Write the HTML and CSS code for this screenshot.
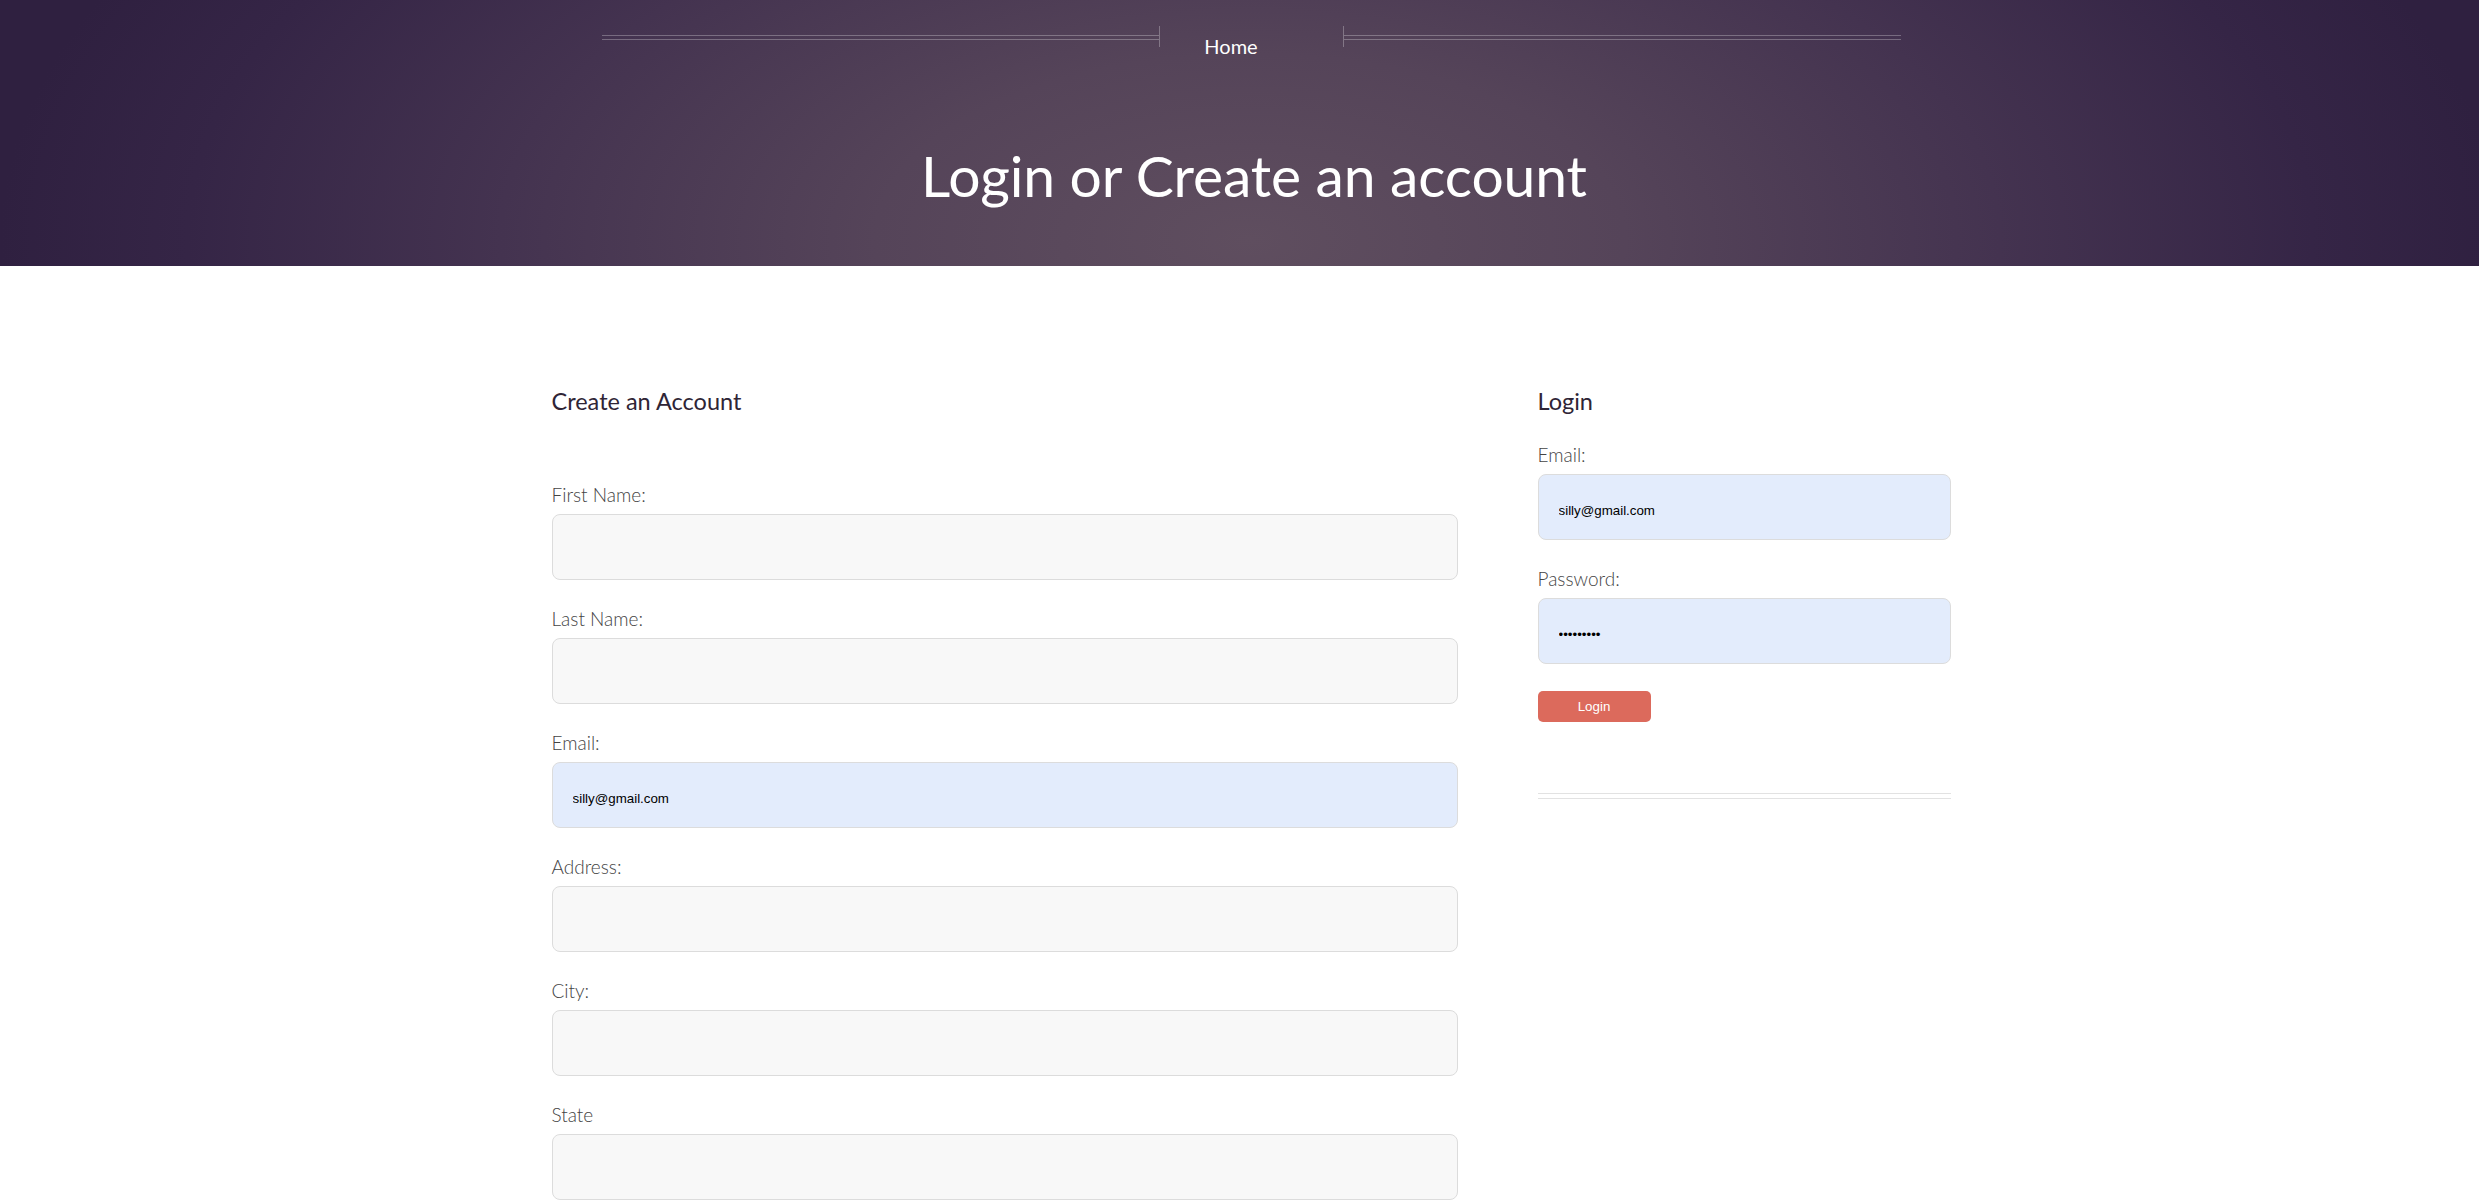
FILE: index.html
```html
<!DOCTYPE html>
<html lang="en">
<head>
<meta charset="utf-8">
<title>Login or Create an account</title>
<link rel="stylesheet" href="styles.css">
</head>
<body>
<header class="hero">
  <nav class="nav">
    <span class="nav-line"></span>
    <a class="nav-link" href="#">Home</a>
    <span class="nav-line"></span>
  </nav>
  <h1 class="hero-title">Login or Create an account</h1>
</header>
<main class="main">
  <div class="columns">
    <section class="col">
      <h2 class="col-title col-title-wide">Create an Account</h2>
      <div class="field">
        <label class="label">First Name:</label>
        <input class="input" type="text">
      </div>
      <div class="field">
        <label class="label">Last Name:</label>
        <input class="input" type="text">
      </div>
      <div class="field">
        <label class="label">Email:</label>
        <input class="input input-filled" type="text" value="silly@gmail.com">
      </div>
      <div class="field">
        <label class="label">Address:</label>
        <input class="input" type="text">
      </div>
      <div class="field">
        <label class="label">City:</label>
        <input class="input" type="text">
      </div>
      <div class="field">
        <label class="label">State</label>
        <input class="input" type="text">
      </div>
    </section>
    <section class="col">
      <h2 class="col-title">Login</h2>
      <div class="field">
        <label class="label">Email:</label>
        <input class="input input-filled" type="text" value="silly@gmail.com">
      </div>
      <div class="field">
        <label class="label">Password:</label>
        <input class="input input-filled" type="password" value="123456789">
      </div>
      <button class="btn" type="button">Login</button>
      <div class="divider"></div>
    </section>
  </div>
</main>
</body>
</html>
```
FILE: styles.css
```css
* { box-sizing: border-box; }
html, body { margin: 0; padding: 0; }
body {
  font-family: Lato, "Liberation Sans", sans-serif;
  background: #fff;
  color: #333;
}
.hero {
  height: 266px;
  padding: 26px 0 0 23px;
  background: radial-gradient(ellipse 1250px 620px at 1250px 240px, #5f4e5f 0%, #554459 30%, #443350 60%, #352546 85%, #2f2040 100%);
  color: #fff;
}
.nav {
  width: 1299px;
  margin: 0 auto;
  display: flex;
  align-items: flex-start;
}
.nav-line {
  flex: 1;
  height: 5px;
  margin-top: 9px;
  border-top: 1px solid rgba(255,255,255,0.28);
  border-bottom: 1px solid rgba(255,255,255,0.28);
}
.nav-link {
  width: 185px;
  height: 21px;
  padding-top: 9px;
  padding-right: 40px;
  line-height: 22px;
  text-align: center;
  font-size: 20px;
  font-weight: 400;
  color: #fff;
  text-decoration: none;
  border-left: 1px solid rgba(255,255,255,0.28);
  border-right: 1px solid rgba(255,255,255,0.28);
}
.hero-title {
  margin: 94px 0 0;
  padding-left: 6px;
  text-align: center;
  font-size: 57px;
  font-weight: 400;
  line-height: 68px;
  color: #fff;
  letter-spacing: -0.1px;
}
.main {
  padding: 121px 0 0 23px;
}
.columns {
  width: 1399px;
  margin: 0 auto;
  display: grid;
  grid-template-columns: 906px 413px;
  column-gap: 80px;
}
.col-title {
  margin: 0 0 27px;
  font-size: 23.5px;
  font-weight: 400;
  line-height: 29px;
  color: #2f2536;
}
.col-title-wide { margin-bottom: 67px; }
.field {
  display: flex;
  flex-direction: column;
  margin-bottom: 27px;
}
.label {
  font-size: 19px;
  font-weight: 300;
  line-height: 24px;
  color: #444;
  margin-bottom: 7px;
}
.input {
  height: 66px;
  width: 100%;
  padding: 6px 20px 0;
  border: 1px solid #dcdcdc;
  border-radius: 8px;
  background: #f8f8f8;
  font-family: "Liberation Sans", Arial, sans-serif;
  font-size: 13.33px;
  color: #000;
  outline: none;
}
.input-filled { background: #e3ecfc; }
.btn {
  display: block;
  width: 113px;
  height: 31px;
  border: none;
  border-radius: 5px;
  background: #dc6a5c;
  color: #fff;
  font-family: "Liberation Sans", Arial, sans-serif;
  font-size: 13.33px;
  cursor: pointer;
}
.divider {
  margin-top: 71px;
  height: 6px;
  border-top: 1px solid #e2e2e2;
  border-bottom: 1px solid #e2e2e2;
}
```
